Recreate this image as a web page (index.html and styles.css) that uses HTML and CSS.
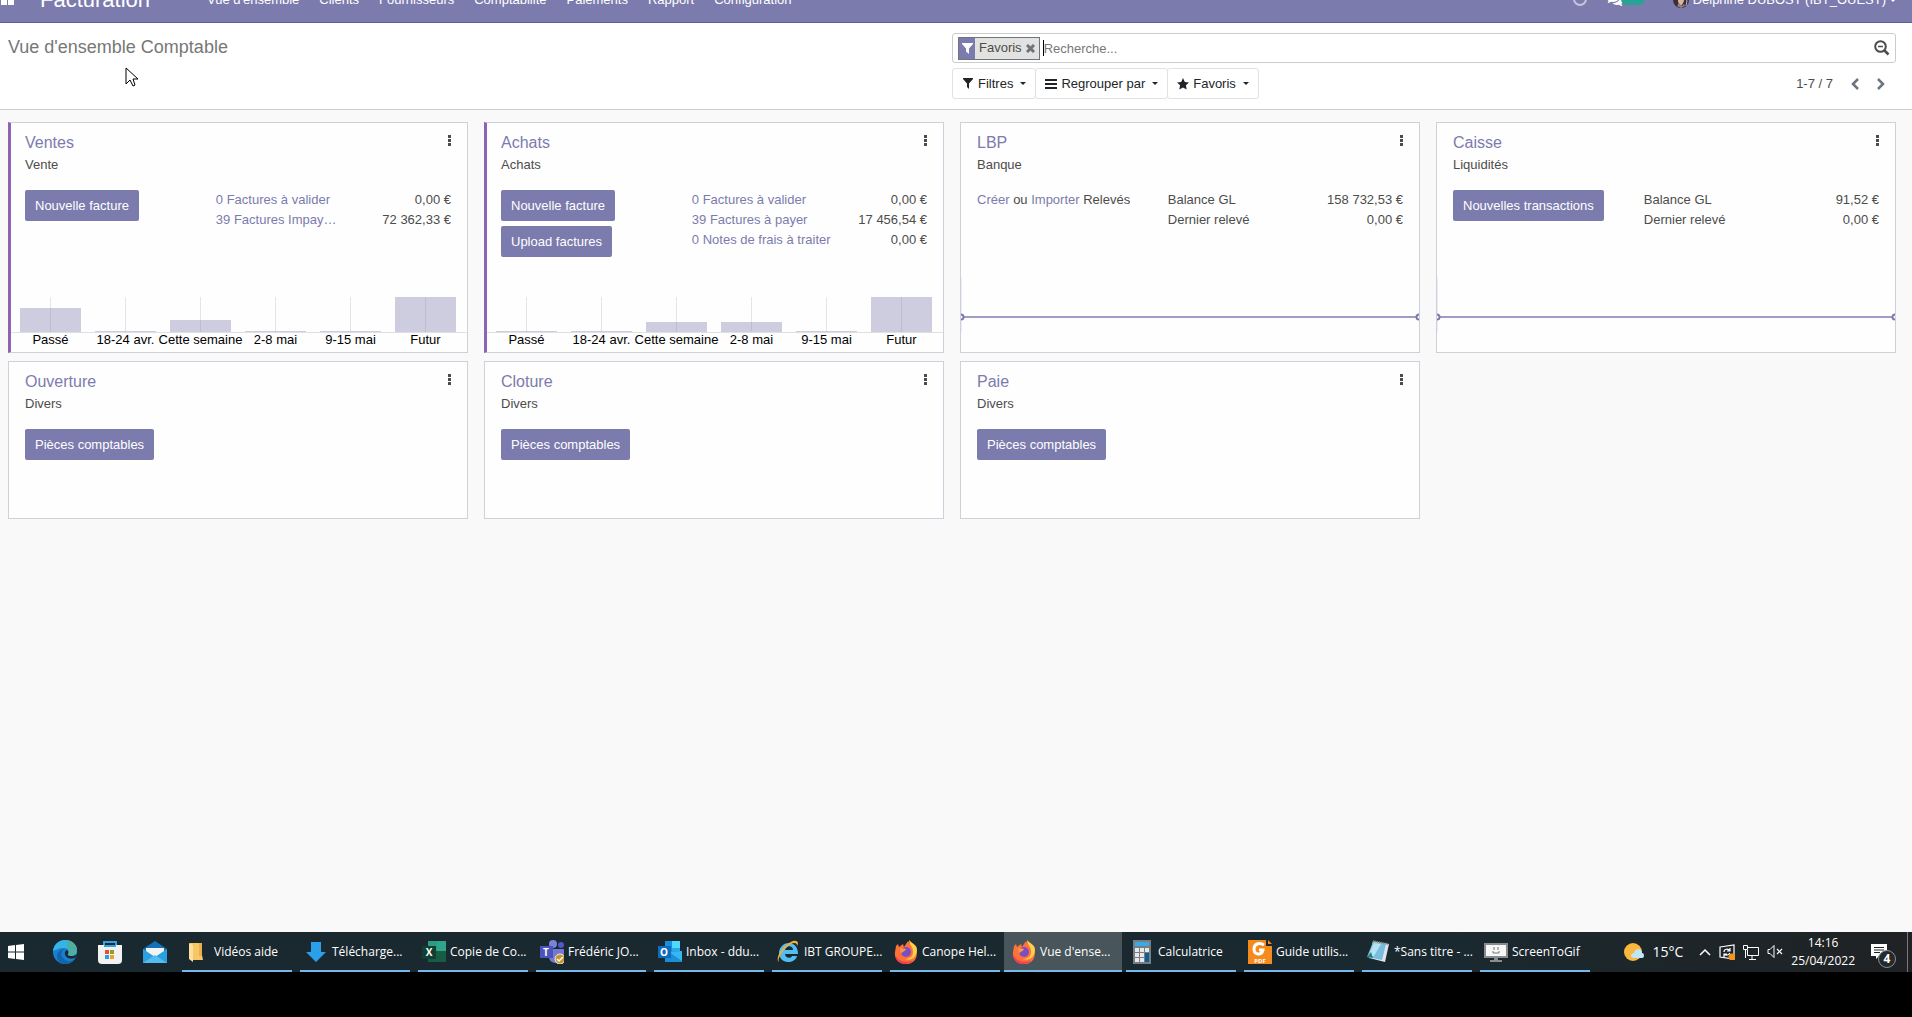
FILE: index.html
```html
<!DOCTYPE html>
<html lang="fr">
<head>
<meta charset="UTF-8">
<meta name="viewport" content="width=device-width, initial-scale=1.0">
<title>Vue d'ensemble Comptable</title>
<link rel="stylesheet" href="styles.css">
</head>
<body>
<header class="navbar">
  <div class="navbar-inner">
    <button class="apps" aria-label="Applications">
      <svg width="14" height="14" viewBox="0 0 14 14"><path d="M1 0h6v5H1zM8 0h6v5H8zM1 7h6v5H1zM8 7h6v5H8z" fill="#fff"/></svg>
    </button>
    <a class="brand" href="#">Facturation</a>
    <nav class="menu">
      <a href="#">Vue d'ensemble</a>
      <a href="#">Clients</a>
      <a href="#">Fournisseurs</a>
      <a href="#">Comptabilité</a>
      <a href="#">Paiements</a>
      <a href="#">Rapport</a>
      <a href="#">Configuration</a>
    </nav>
    <div class="systray">
      <svg width="14" height="14" viewBox="0 0 14 14"><circle cx="7" cy="6" r="6" fill="none" stroke="#c5c3dc" stroke-width="2"/></svg>
      <div class="messages">
        <svg width="16" height="14" viewBox="0 0 16 14"><path d="M6 0c3.500 0 6 2 6 4.500S9.500 9 6 9c-.8 0-1.500-.1-2.200-.3C2.800 9.500 1.500 10 .5 10c.6-.6 1-1.300 1-2C.6 7 0 5.800 0 4.500 0 2 2.500 0 6 0z" fill="#fff"/><path d="M13 4c1.800.7 3 2 3 3.700 0 1.200-.6 2.300-1.600 3 .1.900.5 1.600 1.100 2.300-1.300 0-2.500-.5-3.400-1.300-2.600.6-5.300 0-6.600-1.500C9.500 10.300 13 8 13 4z" fill="#fff"/></svg>
        <span class="badge"></span>
      </div>
      <a class="user" href="#">
        <svg width="16" height="16" viewBox="0 0 16 16"><circle cx="8" cy="8" r="8" fill="#3c2f33"/><path d="M5 3h5l1 6-2 4H6L5 9z" fill="#d9b3a4"/><path d="M4 14l2-3 3 3 2-2 1 2-4 2z" fill="#9a8188"/><path d="M12 4l2 5-1 5" stroke="#b9b3c4" fill="none"/></svg>
        Delphine DUBOST (IBT_OUEST)
        <span class="caret"></span>
      </a>
    </div>
  </div>
</header>

<section class="panel">
  <h1>Vue d'ensemble Comptable</h1>
  <div class="search">
    <div class="search-box">
      <div class="facet">
        <span class="facet-icon"><svg width="11" height="11" viewBox="0 0 11 11"><path d="M0 0h11v1L7 5.500V11L4 8.500v-3L0 1z" fill="#fff"/></svg></span>
        <span class="facet-label">Favoris</span>
        <button class="facet-remove" aria-label="Supprimer"><svg width="9" height="9" viewBox="0 0 9 9"><path d="M1 1l7 7M8 1L1 8" stroke="#6c757d" stroke-width="3"/></svg></button>
      </div>
      <input type="text" id="search" aria-label="Recherche" placeholder="Recherche...">
      <button class="search-more" aria-label="Recherche avancée"><svg width="16" height="16" viewBox="0 0 16 16"><circle cx="6.500" cy="6.500" r="5.300" fill="none" stroke="#4c4c4c" stroke-width="2"/><path d="M4 6.500h5" stroke="#4c4c4c" stroke-width="1.500"/><path d="M10.500 10.500l4 4" stroke="#4c4c4c" stroke-width="2.500"/></svg></button>
    </div>
    <div class="search-options">
      <div class="filters">
        <button><svg width="12" height="11" viewBox="0 0 12 11"><path d="M1 0h10v1L7 5.500V11L5 9V5.500L1 1z" fill="#212529"/></svg>Filtres<span class="caret"></span></button>
        <button><svg width="12" height="10" viewBox="0 0 12 10"><path d="M0 1h12M0 5h12M0 9h12" stroke="#212529" stroke-width="2"/></svg>Regrouper par<span class="caret"></span></button>
        <button><svg width="12" height="12" viewBox="0 0 12 12"><path d="M6 0l1.800 3.900 4.200.5-3.100 2.900.8 4.200L6 9.500l-3.700 2 .8-4.200L0 4.400l4.200-.5z" fill="#212529"/></svg>Favoris<span class="caret"></span></button>
      </div>
      <div class="pager">
        <span>1-7 / 7</span>
        <button aria-label="Précédent"><svg width="8" height="12" viewBox="0 0 8 12"><path d="M7 1L2 6l5 5" fill="none" stroke="#6c757d" stroke-width="2.500"/></svg></button>
        <button aria-label="Suivant"><svg width="8" height="12" viewBox="0 0 8 12"><path d="M1 1l5 5-5 5" fill="none" stroke="#6c757d" stroke-width="2.500"/></svg></button>
      </div>
    </div>
  </div>
</section>

<main>
  <div class="cards">
    <article class="card favorite with-chart">
      <div class="card-head">
        <h2><a href="#">Ventes</a></h2>
        <button class="dots" aria-label="Options"><svg width="3" height="11" viewBox="0 0 3 11"><path d="M0 0h3v3H0zM0 4h3v3H0zM0 8h3v3H0z" fill="#4c4c4c"/></svg></button>
      </div>
      <p class="type">Vente</p>
      <div class="card-body">
        <div class="actions"><button class="btn">Nouvelle facture</button></div>
        <div class="figures">
          <div><a href="#">0 Factures à valider</a><span>0,00 €</span></div>
          <div><a href="#">39 Factures Impay…</a><span>72 362,33 €</span></div>
        </div>
      </div>
      <div class="bar-chart">
        <div class="slot"><i style="height: 24px"></i></div>
        <div class="slot"><i style="height: 1px"></i></div>
        <div class="slot"><i style="height: 12px"></i></div>
        <div class="slot"><i style="height: 1px"></i></div>
        <div class="slot"><i style="height: 1px"></i></div>
        <div class="slot"><i style="height: 35px"></i></div>
      </div>
      <div class="bar-labels">
        <span>Passé</span><span>18-24 avr.</span><span>Cette semaine</span><span>2-8 mai</span><span>9-15 mai</span><span>Futur</span>
      </div>
    </article>

    <article class="card favorite with-chart">
      <div class="card-head">
        <h2><a href="#">Achats</a></h2>
        <button class="dots" aria-label="Options"><svg width="3" height="11" viewBox="0 0 3 11"><path d="M0 0h3v3H0zM0 4h3v3H0zM0 8h3v3H0z" fill="#4c4c4c"/></svg></button>
      </div>
      <p class="type">Achats</p>
      <div class="card-body">
        <div class="actions">
          <button class="btn">Nouvelle facture</button>
          <button class="btn">Upload factures</button>
        </div>
        <div class="figures">
          <div><a href="#">0 Factures à valider</a><span>0,00 €</span></div>
          <div><a href="#">39 Factures à payer</a><span>17 456,54 €</span></div>
          <div><a href="#">0 Notes de frais à traiter</a><span>0,00 €</span></div>
        </div>
      </div>
      <div class="bar-chart">
        <div class="slot"><i style="height: 1px"></i></div>
        <div class="slot"><i style="height: 1px"></i></div>
        <div class="slot"><i style="height: 10px"></i></div>
        <div class="slot"><i style="height: 10px"></i></div>
        <div class="slot"><i style="height: 1px"></i></div>
        <div class="slot"><i style="height: 35px"></i></div>
      </div>
      <div class="bar-labels">
        <span>Passé</span><span>18-24 avr.</span><span>Cette semaine</span><span>2-8 mai</span><span>9-15 mai</span><span>Futur</span>
      </div>
    </article>

    <article class="card with-chart">
      <div class="card-head">
        <h2><a href="#">LBP</a></h2>
        <button class="dots" aria-label="Options"><svg width="3" height="11" viewBox="0 0 3 11"><path d="M0 0h3v3H0zM0 4h3v3H0zM0 8h3v3H0z" fill="#4c4c4c"/></svg></button>
      </div>
      <p class="type">Banque</p>
      <div class="card-body">
        <div class="actions"><p><a href="#">Créer</a> ou <a href="#">Importer</a> Relevés</p></div>
        <div class="figures">
          <div><span>Balance GL</span><span>158 732,53 €</span></div>
          <div><span>Dernier relevé</span><span>0,00 €</span></div>
        </div>
      </div>
      <svg class="line-chart" width="100%" height="55">
        <line x1="0" y1="0" x2="0" y2="55" stroke="#ececf2" stroke-width="2"/>
        <line x1="0" y1="40" x2="100%" y2="40" stroke="#9f9cc6" stroke-width="2"/>
        <circle cx="0" cy="40" r="2.500"/>
        <circle cx="100%" cy="40" r="2.500"/>
      </svg>
    </article>

    <article class="card with-chart">
      <div class="card-head">
        <h2><a href="#">Caisse</a></h2>
        <button class="dots" aria-label="Options"><svg width="3" height="11" viewBox="0 0 3 11"><path d="M0 0h3v3H0zM0 4h3v3H0zM0 8h3v3H0z" fill="#4c4c4c"/></svg></button>
      </div>
      <p class="type">Liquidités</p>
      <div class="card-body">
        <div class="actions"><button class="btn">Nouvelles transactions</button></div>
        <div class="figures">
          <div><span>Balance GL</span><span>91,52 €</span></div>
          <div><span>Dernier relevé</span><span>0,00 €</span></div>
        </div>
      </div>
      <svg class="line-chart" width="100%" height="55">
        <line x1="0" y1="0" x2="0" y2="55" stroke="#ececf2" stroke-width="2"/>
        <line x1="0" y1="40" x2="100%" y2="40" stroke="#9f9cc6" stroke-width="2"/>
        <circle cx="0" cy="40" r="2.500"/>
        <circle cx="100%" cy="40" r="2.500"/>
      </svg>
    </article>

    <article class="card">
      <div class="card-head">
        <h2><a href="#">Ouverture</a></h2>
        <button class="dots" aria-label="Options"><svg width="3" height="11" viewBox="0 0 3 11"><path d="M0 0h3v3H0zM0 4h3v3H0zM0 8h3v3H0z" fill="#4c4c4c"/></svg></button>
      </div>
      <p class="type">Divers</p>
      <div class="card-body">
        <div class="actions"><button class="btn">Pièces comptables</button></div>
      </div>
    </article>

    <article class="card">
      <div class="card-head">
        <h2><a href="#">Cloture</a></h2>
        <button class="dots" aria-label="Options"><svg width="3" height="11" viewBox="0 0 3 11"><path d="M0 0h3v3H0zM0 4h3v3H0zM0 8h3v3H0z" fill="#4c4c4c"/></svg></button>
      </div>
      <p class="type">Divers</p>
      <div class="card-body">
        <div class="actions"><button class="btn">Pièces comptables</button></div>
      </div>
    </article>

    <article class="card">
      <div class="card-head">
        <h2><a href="#">Paie</a></h2>
        <button class="dots" aria-label="Options"><svg width="3" height="11" viewBox="0 0 3 11"><path d="M0 0h3v3H0zM0 4h3v3H0zM0 8h3v3H0z" fill="#4c4c4c"/></svg></button>
      </div>
      <p class="type">Divers</p>
      <div class="card-body">
        <div class="actions"><button class="btn">Pièces comptables</button></div>
      </div>
    </article>
  </div>
</main>

<footer class="taskbar">
  <div class="pinned">
    <button aria-label="Démarrer"><svg width="16" height="16" viewBox="0 0 16 16"><path d="M0 2l7-1v6.500H0zM8 1l8-1v7.500H8zM0 8.500h7V15l-7-1zM8 8.500h8V16l-8-1z" fill="#fff"/></svg></button>
    <button aria-label="Edge"><svg width="24" height="24" viewBox="0 0 24 24"><circle cx="12" cy="12" r="12" fill="#1b7fd0"/><path d="M0 11C1 4 6 0 12 0c7 0 12 5 12 10 0 4-3 6-6 6-2 0-4-1-3-2 2-3 0-6-4-6-5 0-9 2-11 3z" fill="#36b4e8"/><path d="M14 0c6 1 10 5 10 10 0 4-3 6-6 6-2 0-4-1-3-2 2-3 1-6-1-7z" fill="#4fae9f"/><path d="M12 9c-3 1-5 5-2 9 3 4 8 4 12 1-2 3-6 5-10 5C6 24 4 19 4 16c0-4 4-7 8-7z" fill="#1264ad"/><path d="M14 10c-3 1-3 6 1 8 3 1 6 1 8-1l1-3c-2 2-4 2-6 2-2 0-4-1-3-2 1-2 0-3-1-4z" fill="#1b2930"/></svg></button>
    <button aria-label="Store"><svg width="24" height="24" viewBox="0 0 24 24"><path d="M6 7V2h12v5" fill="none" stroke="#30a4e4" stroke-width="2"/><path d="M0 5h24v15q0 4-4 4H4q-4 0-4-4z" fill="#f2f2f2"/><path d="M6 5h12v2H6z" fill="#30a4e4"/><path d="M7 10h4v4H7z" fill="#e8502c"/><path d="M12 10h4v4h-4z" fill="#9a9a28"/><path d="M7 15h4v4H7z" fill="#2b9fe0"/><path d="M12 15h4v4h-4z" fill="#eda02a"/></svg></button>
    <button aria-label="Courrier"><svg width="24" height="24" viewBox="0 0 24 24"><path d="M0 9l12-8 12 8v6H0z" fill="#1172b8"/><path d="M3 8h18v8H3z" fill="#f3f3f3"/><path d="M0 9l12 8 12-8v14H0z" fill="#2b9fe2"/><path d="M0 23l12-8 12 8z" fill="#55bcf0"/></svg></button>
  </div>
  <div class="tasks">
    <button class="task"><svg width="24" height="24" viewBox="0 0 24 24"><path d="M4 3h12v12l1 5H4z" fill="#f6c668"/><path d="M3 3l4 2v17l-4-3z" fill="#ffe09a"/><path d="M13 3h3v13h-3z" fill="#e9b04e"/></svg><span>Vidéos aide</span></button>
    <button class="task"><svg width="24" height="24" viewBox="0 0 24 24"><path d="M7 2h10v10h5L12 22 2 12h5z" fill="#2aa0ea"/></svg><span>Télécharge...</span></button>
    <button class="task"><svg width="24" height="24" viewBox="0 0 24 24"><path d="M6 1h18v21H6z" fill="#185c45"/><path d="M6 1h18v10H6z" fill="#2a9d80"/><path d="M15 1h9v10h-9z" fill="#30a58b"/><path d="M0 6h14v13H0z" fill="#123f31"/><text x="7" y="16" class="logo-letter">X</text></svg><span>Copie de Co...</span></button>
    <button class="task"><svg width="24" height="24" viewBox="0 0 24 24"><circle cx="13" cy="4" r="4" fill="#7b83d8"/><circle cx="21" cy="5" r="3" fill="#5059c9"/><path d="M9 9h15v9q-3 6-9 5-6-1-6-6z" fill="#7279cf"/><path d="M0 6h13v12H0z" fill="#4b53bc"/><text x="6" y="16" class="logo-letter">T</text><circle cx="20" cy="19" r="5" fill="#c5952c" stroke="#eee"/><path d="M17 19l2 2 4-4" fill="none" stroke="#fff" stroke-width="1.500"/></svg><span>Frédéric JO...</span></button>
    <button class="task"><svg width="24" height="24" viewBox="0 0 24 24"><path d="M7 1h15v12H7z" fill="#1490df"/><path d="M14 1h8v7h-8z" fill="#50d9ff"/><path d="M14 8h8v7h-8z" fill="#28a8ea"/><path d="M7 12l17-1v11H7z" fill="#1a8fd8"/><path d="M11 12l13 9V11z" fill="#35b8f1"/><path d="M0 6h13v12H0z" fill="#0f6cbd"/><text x="6" y="16" class="logo-letter">O</text></svg><span>Inbox - ddu...</span></button>
    <button class="task"><svg width="24" height="24" viewBox="0 0 24 24"><path d="M21 16c-1 4-5 6-9 6-5 0-9-4-9-9s4-10 10-10 9 5 9 11H9c0 4 6 5 7 2z" fill="#52bdf3"/><path d="M9 10h8c0-5-7-5-8 0z" fill="#1b2930"/><path d="M3 22c-5-4 5-18 14-21 5-1 6 2 4 5 0-5-6-3-11 2-4 4-9 11-7 14z" fill="#eeb23a"/></svg><span>IBT GROUPE...</span></button>
    <button class="task"><svg width="24" height="24" viewBox="0 0 24 24"><path d="M2 6l2-2 1 3 4-3 1 3 4-6c2 4 6 4 8 9 3 8-3 14-10 14C4 24 0 18 1 12z" fill="#ff7139"/><path d="M15 0c0 5 4 6 4 12s-5 7-8 7c5 2 12-1 12-9 0-5-3-5-8-10z" fill="#ffce4a"/><path d="M1 13c1 8 12 11 18 7-3 5-13 6-17-1z" fill="#ef4056"/><circle cx="12" cy="12" r="5" fill="#7a4fc4"/><path d="M6 8c3 0 4 1 6 1-1 3-4 2-5 5z" fill="#ff9640"/></svg><span>Canope Hel...</span></button>
    <button class="task active"><svg width="24" height="24" viewBox="0 0 24 24"><path d="M2 6l2-2 1 3 4-3 1 3 4-6c2 4 6 4 8 9 3 8-3 14-10 14C4 24 0 18 1 12z" fill="#ff7139"/><path d="M15 0c0 5 4 6 4 12s-5 7-8 7c5 2 12-1 12-9 0-5-3-5-8-10z" fill="#ffce4a"/><path d="M1 13c1 8 12 11 18 7-3 5-13 6-17-1z" fill="#ef4056"/><circle cx="12" cy="12" r="5" fill="#7a4fc4"/><path d="M6 8c3 0 4 1 6 1-1 3-4 2-5 5z" fill="#ff9640"/></svg><span>Vue d'ense...</span></button>
    <button class="task"><svg width="24" height="24" viewBox="0 0 24 24"><path d="M3 0h18v24H3z" fill="#777e83"/><path d="M5 2h14v4H5z" fill="#3aa9e6"/><path d="M5 8h4v4H5zM10 8h4v4h-4zM15 8h4v4h-4zM5 13h4v4H5zM10 13h4v4h-4zM5 18h4v4H5zM10 18h4v4h-4z" fill="#e6e8ea"/><path d="M15 13h4v9h-4z" fill="#0c5e97"/></svg><span>Calculatrice</span></button>
    <button class="task"><svg width="24" height="24" viewBox="0 0 24 24"><path d="M0 0h18v6h6v18H0z" fill="#f58a1f"/><path d="M20 0l4 4h-4z" fill="#f58a1f"/><path d="M16 5c-5-3-10-1-10 4 0 6 8 7 9 1h-4" fill="none" stroke="#fff" stroke-width="3"/><text x="12" y="23" class="logo-small">PDF</text></svg><span>Guide utilis...</span></button>
    <button class="task"><svg width="24" height="24" viewBox="0 0 24 24"><path d="M7 1l16 3-4 18-16-4z" fill="#dfe5e8"/><path d="M7 2l13 2-4 16L1 17z" fill="#78bfdd"/><path d="M8 3l7 1-7 12-6 0z" fill="#b5e3f2"/><path d="M1 17l4-5 2 6z" fill="#257f86"/><path d="M7 1l15 3" stroke="#777" stroke-width="2" stroke-dasharray="1 1"/></svg><span>*Sans titre - ...</span></button>
    <button class="task"><svg width="24" height="24" viewBox="0 0 24 24"><path d="M1 4h22v13H1z" fill="#f7f7f7" stroke="#8b8b8b" stroke-width="2"/><path d="M10 7v3M14 7v3M9 11v2h6v-2" fill="none" stroke="#777"/><path d="M10 18h4v2h4v2H6v-2h4z" fill="#8b8b8b"/></svg><span>ScreenToGif</span></button>
  </div>
  <div class="tray">
    <svg width="20" height="20" viewBox="0 0 20 20"><circle cx="9" cy="10" r="9" fill="#f8b83e"/><path d="M10 16q-3 0-3-3 1-2 3-2 1-4 5-4 3 1 3 4 2 0 2 3 0 2-2 2z" fill="#bfe5fa"/></svg>
    <span class="weather">15°C</span>
    <svg width="12" height="8" viewBox="0 0 12 8"><path d="M1 7l5-5 5 5" fill="none" stroke="#fff" stroke-width="1.500"/></svg>
    <svg width="16" height="16" viewBox="0 0 16 16"><path d="M1 3l14-2v14L1 13z" fill="none" stroke="#fff" stroke-width="1.200"/><path d="M5 8c0-3 4-4 6-1M11 4v3H8M11 9c-1 2-4 3-6 1M5 13v-3h3" fill="none" stroke="#fff" stroke-width="1.200"/><circle cx="13" cy="13" r="3.500" fill="#f59422"/></svg>
    <svg width="16" height="16" viewBox="0 0 16 16"><path d="M5 3.500h10.500v8H4.500V6M9 12v3M6 15.500h7M.5 1.500h4v4h-4zM2.500 6v8" fill="none" stroke="#fff"/></svg>
    <svg width="16" height="16" viewBox="0 0 16 16"><path d="M1 5.500h2l4-4v12l-4-4H1z" fill="none" stroke="#fff"/><path d="M10 5l5 5M15 5l-5 5" stroke="#fff" stroke-width="1.200"/></svg>
    <div class="clock"><time>14:16</time><time>25/04/2022</time></div>
    <button class="notifications" aria-label="Notifications">
      <svg width="16" height="16" viewBox="0 0 16 16"><path d="M0 0h16v12H8l-3 3v-3H0z" fill="#fff"/><path d="M3 3.500h10M3 6h10M3 8.500h6" stroke="#1d2528"/></svg>
      <span class="count">4</span>
    </button>
    <span class="desktop-edge"></span>
  </div>
</footer>
<div class="below"></div>

<svg class="pointer" width="13" height="21" viewBox="0 0 13 21"><path d="M1 1v16l4-4 3 6 2-1-2-6h5z" fill="#fff" stroke="#000"/></svg>
</body>
</html>
```

FILE: styles.css
```css
* {
  box-sizing: border-box;
}
body {
  margin: 0;
  min-height: 100vh;
  display: flex;
  flex-direction: column;
  background: #f9f9f9;
  color: #4c4c4c;
  font-family: "Liberation Sans", Arial, sans-serif;
  font-size: 13px;
  line-height: 20px;
}
h1, h2, p {
  margin: 0;
  font-weight: normal;
}
a {
  color: #7c7bad;
  text-decoration: none;
}
button {
  padding: 0;
  border: 0;
  background: none;
  color: inherit;
  font: inherit;
}
svg {
  display: block;
  flex: none;
}
.caret {
  width: 6px;
  border: 3px solid transparent;
  border-top-color: currentColor;
  border-bottom: 0;
}

/* Top bar, scrolled halfway out of the window */
.navbar {
  height: 23px;
  display: flex;
  align-items: flex-end;
  overflow: hidden;
  background: #7c7bad;
  border-bottom: 1px solid #5f5e97;
}
.navbar-inner {
  flex: 1;
  height: 44px;
  padding-right: 16px;
  display: flex;
  align-items: center;
  color: #fff;
}
.navbar a {
  color: #fff;
}
.apps {
  width: 40px;
}
.brand {
  width: 167px;
  font-size: 22px;
}
.menu {
  display: flex;
  gap: 20px;
}
.systray {
  margin-left: auto;
  display: flex;
  align-items: center;
}
.messages {
  margin: 0 28px 0 20px;
  display: flex;
}
.badge {
  width: 24px;
  height: 12px;
  margin-left: -2px;
  border-radius: 6px;
  background: #28a295;
}
.user {
  display: flex;
  align-items: center;
  gap: 4px;
}

/* Control panel */
.panel {
  display: grid;
  grid-template-columns: 1fr 1fr;
  padding: 10px 16px 10px 8px;
  background: #fff;
  border-bottom: 1px solid #ccc;
}
.panel h1 {
  font-size: 18px;
  line-height: 28px;
  color: #777;
}
.search {
  display: flex;
  flex-direction: column;
  gap: 5px;
}
.search-box {
  height: 30px;
  padding: 0 5px;
  display: flex;
  align-items: center;
  border: 1px solid #ccc;
  border-radius: 3px;
}
.facet {
  height: 23px;
  margin-right: 3px;
  display: flex;
  align-items: center;
  border: 1px solid #6c757d;
  background: #e2e2e0;
}
.facet-icon {
  width: 16px;
  align-self: stretch;
  display: flex;
  align-items: center;
  justify-content: center;
  background: #7c7bad;
}
.facet-label {
  padding: 0 4px;
}
.facet-remove {
  padding-right: 4px;
}
#search {
  flex: 1;
  height: 16px;
  padding: 1px 0 0;
  border: 0;
  border-left: 1px solid #000;
  outline: 0;
  font: inherit;
}
#search::placeholder {
  color: #777;
}
.search-options {
  display: flex;
  justify-content: space-between;
}
.filters {
  display: flex;
}
.filters button {
  height: 31px;
  padding: 0 9px;
  display: flex;
  align-items: center;
  gap: 4px;
  border: 1px solid #dee2e6;
  border-radius: 3px;
  color: #212529;
}
.filters button + button {
  margin-left: -1px;
}
.filters .caret {
  margin-left: 3px;
}
.pager {
  padding-right: 11px;
  display: flex;
  align-items: center;
  gap: 18px;
}

/* Journals */
main {
  flex: 1;
  padding: 12px 16px 12px 8px;
}
.cards {
  display: grid;
  grid-template-columns: repeat(4, 1fr);
  gap: 8px 16px;
}
.card {
  min-height: 158px;
  display: flex;
  flex-direction: column;
  background: #fefefe;
  border: 1px solid #ced0da;
}
.with-chart {
  min-height: 231px;
}
.card-head {
  padding: 10px 16px 0;
  display: flex;
  justify-content: space-between;
}
.card h2 {
  font-size: 16px;
}
.dots {
  height: 14px;
}
.type {
  padding: 2px 16px 0;
}
.card-body {
  margin-top: 15px;
  display: grid;
  grid-template-columns: 5fr 7fr;
}
.actions {
  padding-left: 16px;
  display: flex;
  flex-direction: column;
  align-items: flex-start;
  gap: 5px;
}
.figures {
  padding: 0 16px;
}
.figures div {
  display: flex;
  justify-content: space-between;
}
.btn {
  height: 31px;
  padding: 1px 10px 0;
  border-radius: 2px;
  background: #7c7bad;
  color: #fff;
  white-space: nowrap;
}
.favorite {
  border-left: 3px solid #8f62b5;
}
.favorite .card-head, .favorite .type {
  padding-left: 14px;
}
.favorite .card-body {
  margin-left: -2px;
}

/* Charts */
.bar-chart, .bar-labels {
  display: grid;
  grid-template-columns: repeat(6, minmax(0, 1fr));
  gap: 14px;
  padding: 0 11px 0 9px;
}
.bar-chart {
  margin-top: auto;
  border-bottom: 1px solid #e0e0e3;
}
.slot {
  height: 35px;
  display: flex;
  align-items: flex-end;
  background: linear-gradient(#e5e5e5, #e5e5e5) center / 1px 100% no-repeat;
}
.slot i {
  flex: 1;
  background: rgba(124, 123, 173, 0.37);
}
.bar-labels {
  height: 19px;
  color: #000;
  line-height: 14px;
}
.bar-labels span {
  display: flex;
  justify-content: center;
  white-space: nowrap;
}
.line-chart {
  margin: auto 0 20px;
}
.line-chart circle {
  fill: #fff;
  stroke: #7c7bad;
  stroke-width: 2px;
}

/* Taskbar */
.taskbar {
  height: 40px;
  display: flex;
  background: linear-gradient(90deg, #1a2930 75%, #202224);
  color: #fff;
  font-family: "Open Sans", "Noto Sans", sans-serif;
  font-size: 12px;
}
.pinned {
  width: 178px;
  padding-left: 8px;
  display: flex;
  align-items: center;
  gap: 21px;
}
.pinned button:first-child {
  margin-right: 8px;
}
.tasks {
  display: flex;
}
.task {
  width: 110px;
  margin: 0 4px;
  padding: 2px 0 0 4px;
  display: flex;
  align-items: center;
  gap: 4px;
  border-bottom: 2px solid #76b9ed;
  white-space: nowrap;
}
.active {
  width: 118px;
  margin: 0;
  padding-left: 8px;
  background: #48555a;
}
.tray {
  margin-left: auto;
  display: flex;
  align-items: center;
  gap: 8px;
}
.weather {
  margin-right: 8px;
  font-size: 14px;
}
.clock {
  display: flex;
  flex-direction: column;
  align-items: center;
  line-height: 18px;
}
.notifications {
  position: relative;
  margin: 0 12px 0 8px;
}
.count {
  position: absolute;
  left: 7px;
  top: 6px;
  width: 18px;
  height: 18px;
  border: 1px solid #8a8f91;
  border-radius: 9px;
  background: #24292b;
  font-weight: bold;
  line-height: 16px;
}
.desktop-edge {
  height: 40px;
  margin-right: 4px;
  border-left: 1px solid #777;
}
.logo-letter {
  fill: #fff;
  font-size: 10px;
  font-weight: bold;
  text-anchor: middle;
}
.logo-small {
  fill: #fff;
  font-size: 6px;
  font-weight: bold;
  text-anchor: middle;
}
.below {
  height: 45px;
  background: #000;
}
.pointer {
  position: absolute;
  left: 125px;
  top: 67px;
}
```
